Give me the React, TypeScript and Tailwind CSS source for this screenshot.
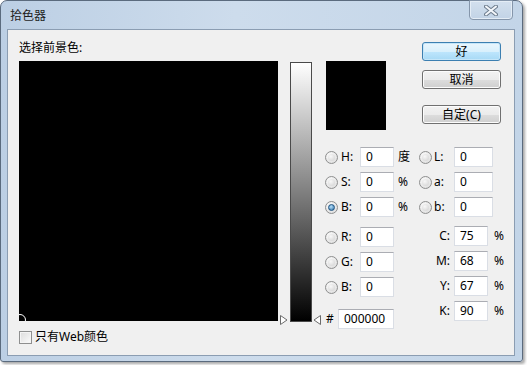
import * as React from "react";

const font = "font-['Noto_Sans','Noto_Sans_CJK_SC',sans-serif]";

function Radio({ checked }: { checked?: boolean }) {
  return (
    <span className="flex h-[13px] w-[13px] shrink-0 items-center justify-center rounded-full border border-[#8e8f8f] bg-[radial-gradient(circle_at_40%_35%,#ffffff,#d6d6d6)]">
      {checked ? (
        <span className="h-[7px] w-[7px] rounded-full border border-[#1d5280] bg-[radial-gradient(circle_at_40%_35%,#b6e0fb,#2b6fa6)]" />
      ) : (
        <span className="h-[7px] w-[7px] rounded-full bg-[radial-gradient(circle_at_40%_35%,#f8f8f8,#d0d0d0)]" />
      )}
    </span>
  );
}

function Field({ value, className }: { value: string; className: string }) {
  return (
    <div
      className={`flex h-[20px] shrink-0 items-center border border-[#dadee5] border-t-[#abadb3] bg-white pl-[5px] text-[12px] leading-none text-black ${className}`}
    >
      {value}
    </div>
  );
}

function Btn({
  children,
  primary,
  className = "",
}: {
  children: React.ReactNode;
  primary?: boolean;
  className?: string;
}) {
  return (
    <div
      className={`flex h-[19px] w-[79px] items-center justify-center rounded-[3px] border text-[12px] leading-none text-black ${
        primary
          ? "border-[#3c7fb1] bg-[linear-gradient(to_bottom,#eaf6fd_0%,#d9f0fc_50%,#bee6fd_51%,#a7d9f5_100%)] shadow-[inset_0_0_0_1px_#c5e6f9]"
          : "border-[#707070] bg-[linear-gradient(to_bottom,#f2f2f2_0%,#ebebeb_50%,#dddddd_51%,#cfcfcf_100%)] shadow-[inset_0_0_0_1px_#fcfcfc]"
      } ${className}`}
    >
      {children}
    </div>
  );
}

function HsbRow({
  left,
  lv,
  unit,
  right,
  rv,
  checked,
}: {
  left: string;
  lv: string;
  unit: string;
  right: string;
  rv: string;
  checked?: boolean;
}) {
  return (
    <div className="flex h-[20px] items-center text-[12px] text-black">
      <Radio checked={checked} />
      <span className="w-[22px] pl-[3px]">{left}</span>
      <Field value={lv} className="w-[34px]" />
      <span className="w-[25px] pl-[4px]">{unit}</span>
      <Radio />
      <span className="w-[22px] pl-[2px]">{right}</span>
      <Field value={rv} className="w-[39px]" />
    </div>
  );
}

function RgbRow({ label, value }: { label: string; value: string }) {
  return (
    <div className="flex h-[20px] items-center text-[12px] text-black">
      <Radio />
      <span className="w-[22px] pl-[3px]">{label}</span>
      <Field value={value} className="w-[34px]" />
    </div>
  );
}

function CmykRow({ label, value }: { label: string; value: string }) {
  return (
    <div className="flex h-[20px] items-center text-[12px] text-black">
      <span className="w-[58px] pr-[2px] text-right">{label}</span>
      <Field value={value} className="ml-[2px] w-[34px]" />
      <span className="ml-[6px]">%</span>
    </div>
  );
}

function Marker({ dir }: { dir: "right" | "left" }) {
  return (
    <svg width="8" height="10" viewBox="0 0 8 10">
      {dir === "right" ? (
        <path d="M0.5 0.5 L7 5 L0.5 9.5 Z" fill="#fff" stroke="#6b6b6b" />
      ) : (
        <path d="M7.5 0.5 L1 5 L7.5 9.5 Z" fill="#fff" stroke="#6b6b6b" />
      )}
    </svg>
  );
}

export default function App() {
  return (
    <div className={`h-[365px] w-[527px] overflow-hidden bg-white ${font}`}>
      <div className="flex h-[362px] w-[523px] flex-col rounded-t-[7px] rounded-b-[3px] border border-[#5b6b7e] bg-[linear-gradient(to_right,#bccfe4,#cddcec_45%,#c3d5e8)] shadow-[2px_2px_3px_rgba(0,0,0,0.35)]">
        {/* title bar */}
        <div className="flex h-[28px] items-start justify-between">
          <span className="pl-[9px] pt-[8px] text-[12px] leading-[14px] text-[#1e1e1e]">
            拾色器
          </span>
          <div className="mr-[9px] mt-[-1px] flex h-[20px] w-[44px] items-center justify-center rounded-b-[4px] border border-[#8596ab] bg-[linear-gradient(to_bottom,#d3e0ee,#c2d3e6)] shadow-[inset_0_0_0_1px_#e4edf6]">
            <svg width="14" height="11" viewBox="0 0 14 11">
              <path
                d="M2 1.5 L12 9.5 M12 1.5 L2 9.5"
                stroke="#6f7e8f"
                strokeWidth="4"
                strokeLinecap="round"
              />
              <path
                d="M2 1.5 L12 9.5 M12 1.5 L2 9.5"
                stroke="#f4f7fb"
                strokeWidth="2"
                strokeLinecap="round"
              />
            </svg>
          </div>
        </div>

        {/* client area */}
        <div className="mb-[5px] ml-[6px] mr-[7px] flex flex-1 border border-[#8b9db2] bg-[#f0f0f0]">
          {/* colour field */}
          <div className="flex w-[270px] flex-col pl-[11px]">
            <div className="h-[31px] pt-[11px] text-[12px] leading-[14px] text-black">
              选择前景色:
            </div>
            <div className="relative h-[260px] w-[259px] overflow-hidden bg-black">
              <div className="absolute bottom-[-5px] left-[-5px] h-[12px] w-[12px] rounded-full border border-white" />
            </div>
            <div className="mt-[9px] flex items-center text-[12px] text-black">
              <span className="h-[13px] w-[13px] border border-[#8e8f8f] bg-[linear-gradient(135deg,#dcdcdc,#fbfbfb)] shadow-[inset_0_0_0_1px_#f4f4f4]" />
              <span className="ml-[3px] leading-[14px]">只有Web颜色</span>
            </div>
          </div>

          {/* slider */}
          <div className="ml-[12px] pt-[32px]">
            <div className="relative h-[260px] w-[22px] border border-[#4a4a4a] bg-[linear-gradient(to_bottom,#ffffff,#000000)]">
              <div className="absolute bottom-[-4px] left-[-11px] flex">
                <Marker dir="right" />
              </div>
              <div className="absolute bottom-[-4px] right-[-10px] flex">
                <Marker dir="left" />
              </div>
            </div>
          </div>

          {/* right part */}
          <div className="ml-[13px] flex w-[189px] flex-col">
            <div className="flex pt-[12px]">
              <div className="ml-[1px] mt-[19px] h-[69px] w-[60px] bg-black" />
              <div className="ml-[36px] flex flex-col">
                <Btn primary>好</Btn>
                <Btn className="mt-[9px]">取消</Btn>
                <Btn className="mt-[16px]">自定(C)</Btn>
              </div>
            </div>

            <div className="mt-[17px] flex flex-col gap-[5px]">
              <HsbRow left="H:" lv="0" unit="度" right="L:" rv="0" />
              <HsbRow left="S:" lv="0" unit="%" right="a:" rv="0" />
              <HsbRow left="B:" lv="0" unit="%" right="b:" rv="0" checked />
            </div>

            <div className="mt-[10px] flex">
              <div className="flex w-[69px] shrink-0 flex-col">
                <div className="flex flex-col gap-[5px]">
                  <RgbRow label="R:" value="0" />
                  <RgbRow label="G:" value="0" />
                  <RgbRow label="B:" value="0" />
                </div>
                <div className="mt-[12px] flex h-[20px] items-center text-[12px] text-black">
                  <span className="w-[18px] pl-[1px]">#</span>
                  <Field value="000000" className="w-[56px]" />
                </div>
              </div>
              <div className="mt-[-1px] flex flex-col gap-[5px]">
                <CmykRow label="C:" value="75" />
                <CmykRow label="M:" value="68" />
                <CmykRow label="Y:" value="67" />
                <CmykRow label="K:" value="90" />
              </div>
            </div>
          </div>
        </div>
      </div>
    </div>
  );
}
